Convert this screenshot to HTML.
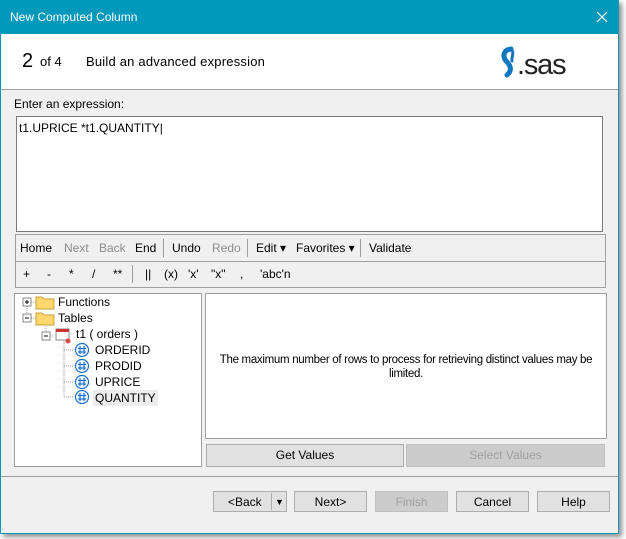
<!DOCTYPE html>
<html><head><style>
*{box-sizing:border-box;margin:0;padding:0}
body{width:626px;height:539px;background:#fff;font-family:"Liberation Sans",sans-serif;font-size:12px;color:#000;position:relative;overflow:hidden}
.a{position:absolute}
.win{left:0;top:0;width:619px;height:534px;border:1px solid #0097b9;background:#f0f0f0;box-shadow:3px 3px 5px rgba(0,0,0,.45)}
.btn{position:absolute;border:1px solid #adadad;background:#e1e1e1;text-align:center;line-height:20px;font-size:12px}
.dis{color:#a0a0a0;background:#cccccc;border-color:#bfbfbf}
.tb span{position:absolute;top:0}
.g{color:#8c8c8c}
</style></head><body>
<div class="a win"></div>
<div class="a" style="left:0;top:0;width:619px;height:34px;background:#0099bc"></div>
<div class="a" style="left:10px;top:10px;color:#fff;font-size:12px">New Computed Column</div>
<svg class="a" style="left:596px;top:11px" width="12" height="12"><path d="M1 1L11 11M11 1L1 11" stroke="#fff" stroke-width="1.2"/></svg>
<div class="a" style="left:1px;top:34px;width:617px;height:56px;background:#fff;border-bottom:1px solid #a0a0a0"></div>
<div class="a" style="left:22px;top:50px;font-size:20px">2</div>
<div class="a" style="left:40px;top:54px;font-size:13px">of 4</div>
<div class="a" style="left:86px;top:54px;font-size:13px;letter-spacing:0.2px">Build an advanced expression</div>
<svg class="a" style="left:497px;top:44px" width="84" height="36" viewBox="0 0 84 36">
<path d="M14 5 C6 6 5 13 10 18 C14 22 15 27 10 31" fill="none" stroke="#0f77c0" stroke-width="5" stroke-linecap="round"/>
<path d="M14 5 C18 9 14 13 15 17" fill="none" stroke="#0f77c0" stroke-width="3" stroke-linecap="round"/>
<text x="20" y="30" font-family="Liberation Sans" font-size="29" fill="#222" letter-spacing="-1.2">.sas</text>
</svg>
<div class="a" style="left:14px;top:97px">Enter an expression:</div>
<div class="a" style="left:16px;top:116px;width:587px;height:116px;background:#fff;border:1px solid #7a7a7a;padding:4px 2px">t1.UPRICE *t1.QUANTITY|</div>
<div class="a" style="left:15px;top:234px;width:591px;height:54px;border:1px solid #a0a0a0"></div>
<div class="a" style="left:16px;top:261px;width:589px;height:1px;background:#a0a0a0"></div>
<div class="a tb" style="left:0;top:241px;width:620px;height:14px">
<span style="left:20px">Home</span><span class="g" style="left:64px">Next</span><span class="g" style="left:99px">Back</span><span style="left:135px">End</span>
<span style="left:163px;width:1px;height:18px;background:#a0a0a0;top:-2px"></span>
<span style="left:172px">Undo</span><span class="g" style="left:212px">Redo</span>
<span style="left:247px;width:1px;height:18px;background:#a0a0a0;top:-2px"></span>
<span style="left:256px">Edit ▾</span><span style="left:296px">Favorites ▾</span>
<span style="left:360px;width:1px;height:18px;background:#a0a0a0;top:-2px"></span>
<span style="left:369px">Validate</span></div>
<div class="a tb" style="left:0;top:267px;width:620px;height:14px">
<span style="left:23px">+</span><span style="left:47px">-</span><span style="left:69px">*</span><span style="left:92px">/</span><span style="left:113px">**</span>
<span style="left:132px;width:1px;height:18px;background:#a0a0a0;top:-2px"></span>
<span style="left:145px">||</span><span style="left:164px">(x)</span><span style="left:188px">'x'</span><span style="left:211px">"x"</span><span style="left:240px">,</span><span style="left:260px">'abc'n</span></div>
<div class="a" style="left:14px;top:293px;width:188px;height:174px;background:#fff;border:1px solid #a0a0a0"></div>
<svg class="a" style="left:14px;top:293px" width="188" height="120">
<g fill="none" stroke="#999" stroke-dasharray="1 1">
<path d="M13 9 H22 M13 13 V25 M13 25 H22 M32 31 V43 M32 43 H40 M50 40 V104 M50 57 H60 M50 73 H60 M50 89 H60 M50 104 H60"/></g>
<g fill="#fff" stroke="#8a8a8a"><rect x="9" y="5" width="8" height="8"/><rect x="9" y="21" width="8" height="8"/><rect x="28" y="39" width="8" height="8"/></g>
<path d="M11 9H15M13 7V11M11 25H15M30 43H34" stroke="#000"/>
<g fill="#ffd76a" stroke="#c9a23a"><path d="M22 4h6l2 2h10v10H22z"/><path d="M22 20h6l2 2h10v10H22z"/></g>
<rect x="42" y="36" width="13" height="11" fill="#fff" stroke="#888"/><rect x="42" y="36" width="13" height="3" fill="#c33"/><circle cx="54" cy="48" r="2.5" fill="#d44"/>
<g fill="none" stroke="#1a6fd0" stroke-width="1.2">
<circle cx="68" cy="57" r="6.5"/><circle cx="68" cy="73" r="6.5"/><circle cx="68" cy="89" r="6.5"/><circle cx="68" cy="104" r="6.5"/>
<path d="M66 53v8M70 53v8M64 55.5h8M64 59h8M66 69v8M70 69v8M64 71.5h8M64 75h8M66 85v8M70 85v8M64 87.5h8M64 91h8M66 100v8M70 100v8M64 102.5h8M64 106h8"/></g>
</svg>
<div class="a" style="left:58px;top:295px">Functions</div>
<div class="a" style="left:58px;top:311px">Tables</div>
<div class="a" style="left:76px;top:327px">t1 ( orders )</div>
<div class="a" style="left:95px;top:343px">ORDERID</div>
<div class="a" style="left:95px;top:359px">PRODID</div>
<div class="a" style="left:95px;top:375px">UPRICE</div>
<div class="a" style="left:93px;top:390px;background:#ececec;padding:1px 2px">QUANTITY</div>
<div class="a" style="left:205px;top:293px;width:402px;height:146px;background:#fff;border:1px solid #a0a0a0"></div>
<div class="a" style="left:205px;top:353px;width:402px;text-align:center;line-height:14px;font-size:11.5px;letter-spacing:-0.3px;white-space:nowrap">The maximum number of rows to process for retrieving distinct values may be<br>limited.</div>
<div class="btn" style="left:206px;top:444px;width:198px;height:23px">Get Values</div>
<div class="btn dis" style="left:406px;top:444px;width:199px;height:23px">Select Values</div>
<div class="a" style="left:1px;top:476px;width:617px;height:1px;background:#a0a0a0"></div>
<div class="btn" style="left:213px;top:491px;width:74px;height:21px;text-align:left;padding-left:14px">&lt;Back<span style="position:absolute;left:57px;top:1px;width:1px;height:17px;background:#adadad"></span><span style="position:absolute;left:61px;top:0;font-size:9px">▼</span></div>
<div class="btn" style="left:294px;top:491px;width:73px;height:21px">Next&gt;</div>
<div class="btn dis" style="left:375px;top:491px;width:73px;height:21px">Finish</div>
<div class="btn" style="left:456px;top:491px;width:73px;height:21px">Cancel</div>
<div class="btn" style="left:537px;top:491px;width:73px;height:21px">Help</div>
</body></html>
